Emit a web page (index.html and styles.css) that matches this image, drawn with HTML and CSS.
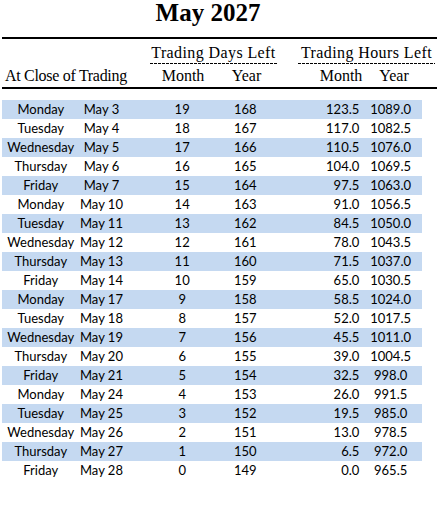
FILE: index.html
```html
<!DOCTYPE html>
<html>
<head>
<meta charset="utf-8">
<link rel="stylesheet" href="styles.css">
</head>
<body>
<div class="page">
  <h1 class="title">May 2027</h1>
  <div class="rule"></div>
  <div class="groups">
    <div class="group days">Trading Days Left</div>
    <div class="group hours">Trading Hours Left</div>
  </div>
  <div class="subhead">
    <div class="sh-label">At Close of Trading</div>
    <div class="sh sh-dm">Month</div>
    <div class="sh sh-dy">Year</div>
    <div class="sh sh-hm">Month</div>
    <div class="sh sh-hy">Year</div>
  </div>
  <div class="rule"></div>
  <div class="rows">
    <div class="row band"><span class="c day">Monday</span><span class="c date">May 3</span><span class="c dm">19</span><span class="c dy">168</span><span class="c hm">123.5</span><span class="c hy">1089.0</span></div>
    <div class="row"><span class="c day">Tuesday</span><span class="c date">May 4</span><span class="c dm">18</span><span class="c dy">167</span><span class="c hm">117.0</span><span class="c hy">1082.5</span></div>
    <div class="row band"><span class="c day">Wednesday</span><span class="c date">May 5</span><span class="c dm">17</span><span class="c dy">166</span><span class="c hm">110.5</span><span class="c hy">1076.0</span></div>
    <div class="row"><span class="c day">Thursday</span><span class="c date">May 6</span><span class="c dm">16</span><span class="c dy">165</span><span class="c hm">104.0</span><span class="c hy">1069.5</span></div>
    <div class="row band"><span class="c day">Friday</span><span class="c date">May 7</span><span class="c dm">15</span><span class="c dy">164</span><span class="c hm">97.5</span><span class="c hy">1063.0</span></div>
    <div class="row"><span class="c day">Monday</span><span class="c date">May 10</span><span class="c dm">14</span><span class="c dy">163</span><span class="c hm">91.0</span><span class="c hy">1056.5</span></div>
    <div class="row band"><span class="c day">Tuesday</span><span class="c date">May 11</span><span class="c dm">13</span><span class="c dy">162</span><span class="c hm">84.5</span><span class="c hy">1050.0</span></div>
    <div class="row"><span class="c day">Wednesday</span><span class="c date">May 12</span><span class="c dm">12</span><span class="c dy">161</span><span class="c hm">78.0</span><span class="c hy">1043.5</span></div>
    <div class="row band"><span class="c day">Thursday</span><span class="c date">May 13</span><span class="c dm">11</span><span class="c dy">160</span><span class="c hm">71.5</span><span class="c hy">1037.0</span></div>
    <div class="row"><span class="c day">Friday</span><span class="c date">May 14</span><span class="c dm">10</span><span class="c dy">159</span><span class="c hm">65.0</span><span class="c hy">1030.5</span></div>
    <div class="row band"><span class="c day">Monday</span><span class="c date">May 17</span><span class="c dm">9</span><span class="c dy">158</span><span class="c hm">58.5</span><span class="c hy">1024.0</span></div>
    <div class="row"><span class="c day">Tuesday</span><span class="c date">May 18</span><span class="c dm">8</span><span class="c dy">157</span><span class="c hm">52.0</span><span class="c hy">1017.5</span></div>
    <div class="row band"><span class="c day">Wednesday</span><span class="c date">May 19</span><span class="c dm">7</span><span class="c dy">156</span><span class="c hm">45.5</span><span class="c hy">1011.0</span></div>
    <div class="row"><span class="c day">Thursday</span><span class="c date">May 20</span><span class="c dm">6</span><span class="c dy">155</span><span class="c hm">39.0</span><span class="c hy">1004.5</span></div>
    <div class="row band"><span class="c day">Friday</span><span class="c date">May 21</span><span class="c dm">5</span><span class="c dy">154</span><span class="c hm">32.5</span><span class="c hy">998.0</span></div>
    <div class="row"><span class="c day">Monday</span><span class="c date">May 24</span><span class="c dm">4</span><span class="c dy">153</span><span class="c hm">26.0</span><span class="c hy">991.5</span></div>
    <div class="row band"><span class="c day">Tuesday</span><span class="c date">May 25</span><span class="c dm">3</span><span class="c dy">152</span><span class="c hm">19.5</span><span class="c hy">985.0</span></div>
    <div class="row"><span class="c day">Wednesday</span><span class="c date">May 26</span><span class="c dm">2</span><span class="c dy">151</span><span class="c hm">13.0</span><span class="c hy">978.5</span></div>
    <div class="row band"><span class="c day">Thursday</span><span class="c date">May 27</span><span class="c dm">1</span><span class="c dy">150</span><span class="c hm">6.5</span><span class="c hy">972.0</span></div>
    <div class="row"><span class="c day">Friday</span><span class="c date">May 28</span><span class="c dm">0</span><span class="c dy">149</span><span class="c hm">0.0</span><span class="c hy">965.5</span></div>
  </div>
</div>
</body>
</html>
```

FILE: styles.css
```css
html, body {
  margin: 0;
  padding: 0;
  background: #ffffff;
}
.page {
  padding-left: 2px;
  width: 435px;
  color: #000;
}
.title {
  margin: 0;
  width: 412px;
  height: 37px;
  font-family: "Liberation Serif", "DejaVu Serif", serif;
  font-weight: bold;
  font-size: 25px;
  line-height: 26px;
  text-align: center;
}
.rule {
  height: 2px;
  background: #000;
}
.groups {
  display: flex;
  height: 25px;
  font-family: "Liberation Serif", "DejaVu Serif", serif;
  font-size: 16px;
  letter-spacing: 0.4px;
}
.group {
  box-sizing: border-box;
  height: 25px;
  line-height: 20px;
  padding-top: 4px;
  text-align: center;
  white-space: nowrap;
  background-image: repeating-linear-gradient(90deg, #000 0 3px, transparent 3px 4px);
  background-size: 100% 1px;
  background-position: left bottom;
  background-repeat: no-repeat;
}
.days {
  margin-left: 148px;
  width: 127px;
}
.hours {
  margin-left: 21px;
  width: 137px;
}
.subhead {
  display: flex;
  height: 23px;
  font-family: "Liberation Serif", "DejaVu Serif", serif;
  font-size: 16px;
  line-height: 24px;
  white-space: nowrap;
}
.sh-label {
  width: 148px;
  padding-left: 3px;
  box-sizing: border-box;
  letter-spacing: -0.3px;
}
.sh {
  display: flex;
  justify-content: center;
}
.sh-dm { width: 66px; }
.sh-dy { width: 61px; }
.sh-hm { margin-left: 21px; width: 86px; }
.sh-hy { width: 20px; }
.rows {
  padding-top: 11px;
  width: 420px;
  font-family: "Lato", "Liberation Sans", sans-serif;
  font-size: 13px;
}
.row {
  display: flex;
  height: 19px;
  line-height: 19px;
  white-space: nowrap;
}
.band {
  background: #c5d9f1;
}
.c {
  display: flex;
  justify-content: center;
}
.day { width: 78px; }
.date { width: 44px; }
.dm { width: 66px; margin-left: 26px; }
.dy { width: 61px; }
.hm { width: 63px; margin-left: 21px; justify-content: flex-end; }
.hy { width: 63px; }
```
